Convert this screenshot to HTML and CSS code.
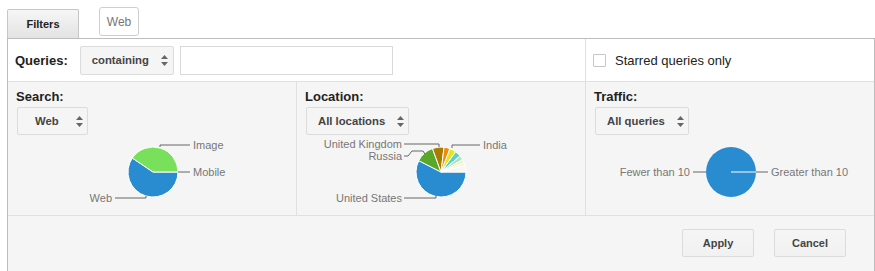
FILE: index.html
```html
<!DOCTYPE html>
<html lang="en">
<head>
    <meta charset="UTF-8">
    <meta name="viewport" content="width=device-width, initial-scale=1.0">
    <title>Search Queries Filters</title>
    <link rel="stylesheet" href="styles.css">
</head>
<body>

<div class="page">

    <div class="tabs">
        <div class="tab-filters">Filters</div>
        <div class="tab-web">Web</div>
    </div>

    <div class="panel">

        <div class="row-query">
            <div class="query-cell">
                <span class="field-label">Queries:</span>
                <div class="select select-tall">containing
                    <svg class="updown" width="7" height="11" viewBox="0 0 7 11"><polygon points="0,4 3.5,0 7,4"/><polygon points="0,7 3.5,11 7,7"/></svg>
                </div>
                <input type="text" class="text-input">
            </div>
            <div class="starred-cell">
                <span class="checkbox"></span>
                <span class="starred-label">Starred queries only</span>
            </div>
        </div>

        <div class="row-charts">

            <div class="chart-col">
                <div class="col-title">Search:</div>
                <div class="select select-web">Web
                    <svg class="updown" width="7" height="11" viewBox="0 0 7 11"><polygon points="0,4 3.5,0 7,4"/><polygon points="0,7 3.5,11 7,7"/></svg>
                </div>
                <svg class="pie" width="288" height="79" viewBox="0 0 288 79">
                    <path class="slice" fill="#2a8cd0" d="M145,37 L170,37 A25,25 0 1 1 124.28,23.02 Z"/>
                    <path class="slice" fill="#78e05a" d="M145,37 L124.28,23.02 A25,25 0 0 1 170,37 Z"/>
                    <polyline class="leader" points="152,12 152,10 182,10"/>
                    <text class="pie-label" x="185" y="14">Image</text>
                    <polyline class="leader" points="170,37 182,37"/>
                    <text class="pie-label" x="185" y="41">Mobile</text>
                    <polyline class="leader" points="107,63 138,63 138,61"/>
                    <text class="pie-label end" x="104" y="67">Web</text>
                </svg>
            </div>

            <div class="chart-col">
                <div class="col-title">Location:</div>
                <div class="select">All locations
                    <svg class="updown" width="7" height="11" viewBox="0 0 7 11"><polygon points="0,4 3.5,0 7,4"/><polygon points="0,7 3.5,11 7,7"/></svg>
                </div>
                <svg class="pie" width="288" height="79" viewBox="0 0 288 79">
                    <path class="slice" fill="#2a8cd0" d="M144,37 L169,37 A25,25 0 1 1 121.72,25.65 Z"/>
                    <path class="slice" fill="#5aa829" d="M144,37 L121.72,25.65 A25,25 0 0 1 135.45,13.51 Z"/>
                    <path class="slice" fill="#a77c00" d="M144,37 L135.45,13.51 A25,25 0 0 1 147.05,12.19 Z"/>
                    <path class="slice" fill="#f08a0b" d="M144,37 L147.05,12.19 A25,25 0 0 1 152.96,13.66 Z"/>
                    <path class="slice" fill="#e5e51c" d="M144,37 L152.96,13.66 A25,25 0 0 1 158.70,16.78 Z"/>
                    <path class="slice" fill="#5bd3c4" d="M144,37 L158.70,16.78 A25,25 0 0 1 163.15,20.93 Z"/>
                    <path class="slice" fill="#a8e6c0" d="M144,37 L163.15,20.93 A25,25 0 0 1 165.65,24.50 Z"/>
                    <path class="slice" fill="#e6f5c4" d="M144,37 L165.65,24.50 A25,25 0 0 1 167.18,27.64 Z"/>
                    <path class="slice" fill="#f3f3d8" d="M144,37 L167.18,27.64 A25,25 0 0 1 168.15,30.53 Z"/>
                    <path class="slice" fill="#f7f7ee" d="M144,37 L168.15,30.53 A25,25 0 0 1 169,37 Z"/>
                    <polyline class="leader" points="107,9 142,9 142,12"/>
                    <text class="pie-label end" x="105" y="13">United Kingdom</text>
                    <polyline class="leader" points="107,21 111,21 115,16 126,16 128,19"/>
                    <text class="pie-label end" x="105" y="25">Russia</text>
                    <polyline class="leader" points="155,13 155,10 183,10"/>
                    <text class="pie-label" x="186" y="14">India</text>
                    <polyline class="leader" points="107,63 139,63 139,61"/>
                    <text class="pie-label end" x="105" y="67">United States</text>
                </svg>
            </div>

            <div class="chart-col">
                <div class="col-title">Traffic:</div>
                <div class="select">All queries
                    <svg class="updown" width="7" height="11" viewBox="0 0 7 11"><polygon points="0,4 3.5,0 7,4"/><polygon points="0,7 3.5,11 7,7"/></svg>
                </div>
                <svg class="pie" width="288" height="79" viewBox="0 0 288 79">
                    <circle fill="#2a8cd0" cx="145" cy="37" r="25"/>
                    <line x1="145" y1="37" x2="170" y2="37" stroke="#fff" stroke-width="1"/>
                    <polyline class="leader" points="107,37 120,37"/>
                    <text class="pie-label end" x="104" y="41">Fewer than 10</text>
                    <polyline class="leader" points="170,37 182,37"/>
                    <text class="pie-label" x="185" y="41">Greater than 10</text>
                </svg>
            </div>

        </div>

        <div class="row-actions">
            <button class="btn">Apply</button>
            <button class="btn">Cancel</button>
        </div>

    </div>
</div>

</body>
</html>
```

FILE: styles.css
```css
        body {
            margin: 0;
            font-family: "Liberation Sans", Arial, sans-serif;
            color: #222;
            background: #fff;
        }

        .page {
            padding-left: 7px;
            width: 868px;
        }

        .tabs {
            display: flex;
            align-items: flex-start;
            height: 38px;
        }

        .tab-filters {
            margin-top: 9px;
            width: 72px;
            height: 29px;
            box-sizing: border-box;
            border: 1px solid #c6c6c6;
            border-bottom: none;
            border-radius: 2px 2px 0 0;
            background: linear-gradient(#f6f6f6, #e3e3e3);
            font-size: 11px;
            font-weight: bold;
            display: flex;
            align-items: center;
            justify-content: center;
        }

        .tab-web {
            margin-top: 7px;
            margin-left: 20px;
            width: 40px;
            height: 29px;
            box-sizing: border-box;
            border: 1px solid #cfcfcf;
            border-radius: 3px;
            font-size: 12px;
            color: #777;
            display: flex;
            align-items: center;
            justify-content: center;
        }

        .panel {
            width: 868px;
            box-sizing: border-box;
            border: 1px solid #bdbdbd;
            border-bottom: none;
        }

        .row-query {
            display: grid;
            grid-template-columns: 577px 289px;
            height: 42px;
        }

        .query-cell {
            display: flex;
            align-items: center;
            padding-left: 7px;
        }

        .field-label {
            font-size: 13px;
            font-weight: bold;
            margin-right: 12px;
        }

        .select {
            display: flex;
            align-items: center;
            gap: 12px;
            height: 28px;
            box-sizing: border-box;
            padding: 0 4px 0 11px;
            margin-left: 1px;
            border: 1px solid #dcdcdc;
            border-radius: 2px;
            background: #f5f5f5;
            font-size: 11.3px;
            font-weight: bold;
            color: #444;
            align-self: flex-start;
        }

        .select-tall {
            height: 29px;
            padding-right: 5px;
            margin-left: 0;
            align-self: center;
        }

        .select-web {
            width: 71px;
            padding-left: 17px;
            gap: 17px;
        }

        .updown {
            fill: #666;
        }

        .text-input {
            margin-left: 6px;
            width: 213px;
            height: 29px;
            box-sizing: border-box;
            border: 1px solid #d9d9d9;
            padding: 0;
            background: #fff;
        }

        .starred-cell {
            border-left: 1px solid #e0e0e0;
            display: flex;
            align-items: center;
            padding-left: 7px;
        }

        .checkbox {
            width: 13px;
            height: 13px;
            box-sizing: border-box;
            border: 1px solid #c6c6c6;
            border-radius: 1px;
            background: #fff;
            margin-right: 9px;
        }

        .starred-label {
            font-size: 13px;
            color: #222;
        }

        .row-charts {
            display: grid;
            grid-template-columns: 288px 289px 289px;
            height: 134px;
            box-sizing: border-box;
            border-top: 1px solid #e0e0e0;
            background: #f5f5f5;
        }

        .chart-col {
            display: flex;
            flex-direction: column;
            padding-top: 7px;
        }

        .chart-col + .chart-col {
            border-left: 1px solid #e0e0e0;
        }

        .col-title {
            font-size: 13px;
            line-height: 15px;
            font-weight: bold;
            padding-left: 8px;
            margin-bottom: 3px;
        }

        .chart-col .select {
            margin-left: 9px;
        }

        .pie {
            display: block;
        }

        .slice {
            stroke: #fff;
            stroke-width: 1;
            stroke-linejoin: round;
        }

        .leader {
            fill: none;
            stroke: #666;
            stroke-width: 1;
        }

        .pie-label {
            font-family: "Liberation Sans", Arial, sans-serif;
            font-size: 11px;
            fill: #777;
        }

        .pie-label.end {
            text-anchor: end;
        }

        .row-actions {
            display: flex;
            justify-content: flex-end;
            gap: 20px;
            height: 60px;
            box-sizing: border-box;
            padding: 13px 28px 0 0;
            border-top: 1px solid #e0e0e0;
            background: #f5f5f5;
        }

        .btn {
            width: 72px;
            height: 28px;
            border: 1px solid #dcdcdc;
            border-radius: 2px;
            background: linear-gradient(#f5f5f5, #f1f1f1);
            font-family: "Liberation Sans", Arial, sans-serif;
            font-size: 11px;
            font-weight: bold;
            color: #444;
            padding: 0;
        }
```
